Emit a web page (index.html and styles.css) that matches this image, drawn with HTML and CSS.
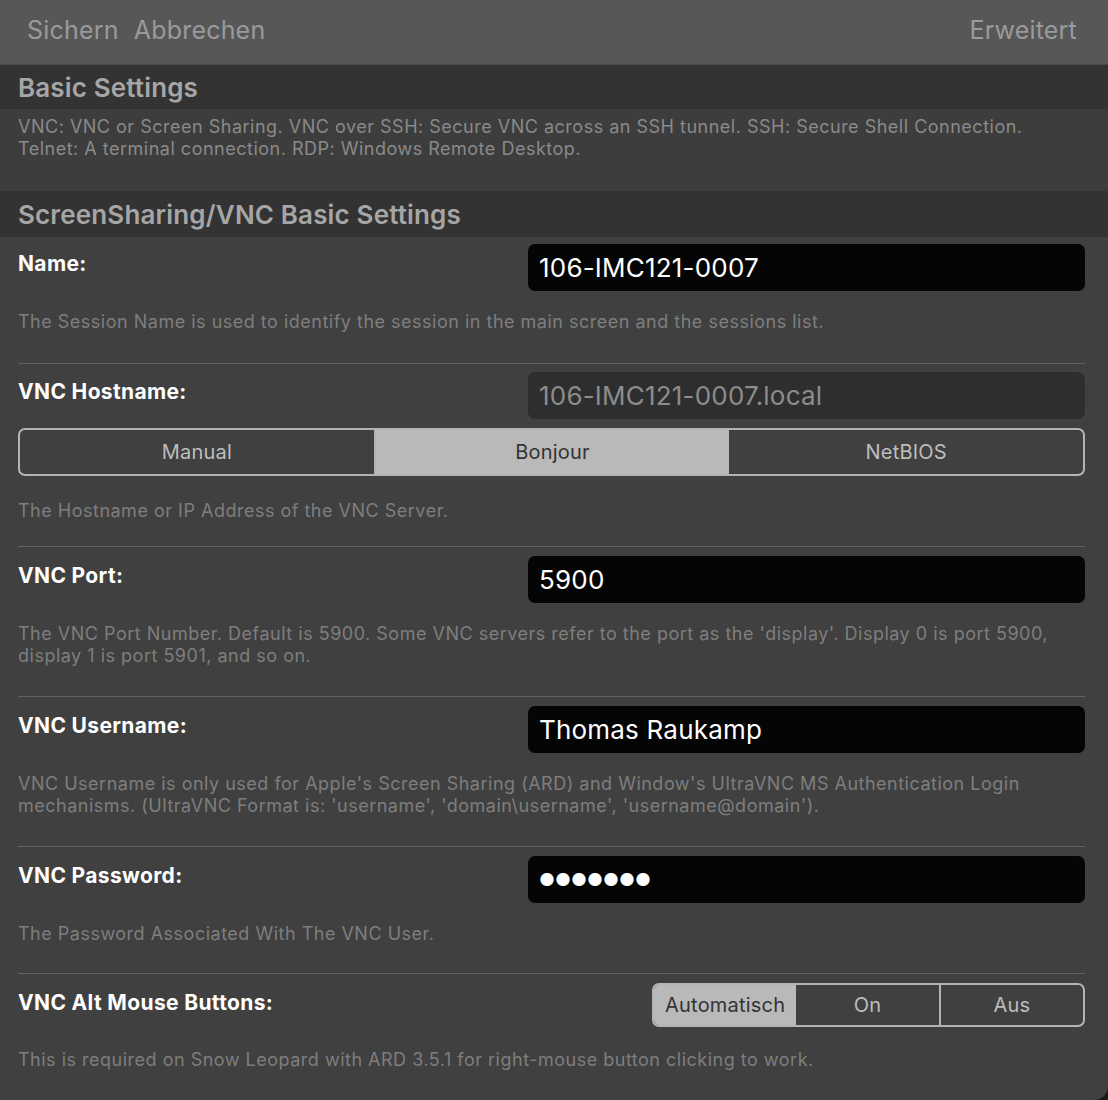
FILE: index.html
```html
<!DOCTYPE html>
<html lang="de">
<head>
<meta charset="utf-8">
<title>VNC Settings</title>
<link rel="stylesheet" href="styles.css">
</head>
<body>
<div class="window">
  <header class="toolbar">
    <div class="toolbar-left">
      <span class="tb-btn">Sichern</span>
      <span class="tb-btn">Abbrechen</span>
    </div>
    <span class="tb-btn">Erweitert</span>
  </header>

  <div class="section-header">Basic Settings</div>
  <div class="section-desc">
    <p>VNC: VNC or Screen Sharing. VNC over SSH: Secure VNC across an SSH tunnel. SSH: Secure Shell Connection.<br>Telnet: A terminal connection. RDP: Windows Remote Desktop.</p>
  </div>

  <div class="section-header tall">ScreenSharing/VNC Basic Settings</div>

  <div class="rows">
    <div class="row first">
      <div class="row-line">
        <label class="label">Name:</label>
        <div class="field">106-IMC121-0007</div>
      </div>
      <p class="help">The Session Name is used to identify the session in the main screen and the sessions list.</p>
    </div>

    <div class="row host">
      <div class="row-line">
        <label class="label">VNC Hostname:</label>
        <div class="field disabled">106-IMC121-0007.local</div>
      </div>
      <div class="segmented wide">
        <span class="seg">Manual</span>
        <span class="seg selected">Bonjour</span>
        <span class="seg">NetBIOS</span>
      </div>
      <p class="help after-seg">The Hostname or IP Address of the VNC Server.</p>
    </div>

    <div class="row">
      <div class="row-line">
        <label class="label">VNC Port:</label>
        <div class="field">5900</div>
      </div>
      <p class="help">The VNC Port Number. Default is 5900. Some VNC servers refer to the port as the 'display'. Display 0 is port 5900,<br>display 1 is port 5901, and so on.</p>
    </div>

    <div class="row">
      <div class="row-line">
        <label class="label">VNC Username:</label>
        <div class="field">Thomas Raukamp</div>
      </div>
      <p class="help">VNC Username is only used for Apple's Screen Sharing (ARD) and Window's UltraVNC MS Authentication Login<br>mechanisms. (UltraVNC Format is: 'username', 'domain\username', 'username@domain').</p>
    </div>

    <div class="row pass">
      <div class="row-line">
        <label class="label">VNC Password:</label>
        <div class="field password">●●●●●●●</div>
      </div>
      <p class="help">The Password Associated With The VNC User.</p>
    </div>

    <div class="row last">
      <div class="row-line">
        <label class="label">VNC Alt Mouse Buttons:</label>
        <div class="segmented small">
          <span class="seg selected">Automatisch</span>
          <span class="seg">On</span>
          <span class="seg">Aus</span>
        </div>
      </div>
      <p class="help">This is required on Snow Leopard with ARD 3.5.1 for right-mouse button clicking to work.</p>
    </div>
  </div>
</div>
</body>
</html>
```

FILE: styles.css
```css
* { box-sizing: border-box; }
html, body {
  margin: 0;
  padding: 0;
  background: #1a1a1a;
}
body {
  font-family: Inter, "Noto Sans", sans-serif;
  width: 1108px;
  height: 1100px;
  overflow: hidden;
}
.window {
  width: 1108px;
  height: 1100px;
  background: #404040;
  border-bottom-right-radius: 14px;
  overflow: hidden;
}
.toolbar {
  height: 65px;
  background: #575757;
  display: flex;
  align-items: center;
  justify-content: space-between;
  padding: 0 31px 4px 27px;
  border-bottom: 1px solid #4a4a4a;
}
.toolbar-left {
  display: flex;
  gap: 15px;
}
.tb-btn {
  font-size: 25px;
  color: #9a9a9a;
  letter-spacing: 0.2px;
}
.section-header {
  background: #333333;
  color: #a6a6a6;
  font-size: 26px;
  font-weight: 600;
  letter-spacing: 0.15px;
  padding: 0 18px;
  height: 44px;
  line-height: 46px;
}
.section-header.tall {
  height: 46px;
  line-height: 47px;
}
.section-desc {
  background: #3d3d3d;
  padding: 7px 18px 0;
  height: 82px;
}
.section-desc p {
  margin: 0;
  font-size: 18px;
  line-height: 22px;
  letter-spacing: 0.5px;
  color: #8a8a8a;
}
.rows {
  padding: 0 23px 0 18px;
}
.row {
  padding: 9px 0 29px;
  border-bottom: 1px solid #636363;
}
.row.first { padding-top: 7px; padding-bottom: 30px; }
.row.host { padding-top: 8px; padding-bottom: 24px; }
.row.pass { padding-bottom: 28px; }
.row.last { border-bottom: none; }
.row.last .help { margin-top: 22px; }
.row-line {
  display: flex;
  justify-content: space-between;
  align-items: flex-start;
}
.label {
  font-size: 21px;
  font-weight: 700;
  letter-spacing: 0.35px;
  color: #ffffff;
  line-height: 25px;
  padding-top: 7px;
}
.field {
  width: 557px;
  height: 47px;
  background: #050505;
  border-radius: 7px;
  color: #ffffff;
  font-size: 26px;
  letter-spacing: 0.2px;
  line-height: 47px;
  padding-left: 11px;
}
.field.disabled {
  background: #2e2e2e;
  color: #8c8c8c;
}
.field.password {
  font-size: 17.5px;
  letter-spacing: 0;
}
.segmented {
  display: flex;
  border: 2px solid #b4b4b4;
  border-radius: 7px;
  overflow: hidden;
}
.segmented.wide {
  margin-top: 9px;
  height: 48px;
}
.segmented.small {
  width: 433px;
  height: 44px;
}
.seg {
  flex: 1;
  display: flex;
  align-items: center;
  justify-content: center;
  font-size: 20px;
  letter-spacing: 0.2px;
  color: #bdbdbd;
}
.seg + .seg { border-left: 2px solid #b4b4b4; }
.seg.selected {
  background: #b9b9b9;
  color: #333333;
}
.seg.selected + .seg { border-left: none; }
.help {
  margin: 20px 0 0;
  font-size: 18px;
  line-height: 22px;
  letter-spacing: 0.5px;
  color: #7e7e7e;
}
.help.after-seg { margin-top: 24px; }
```
